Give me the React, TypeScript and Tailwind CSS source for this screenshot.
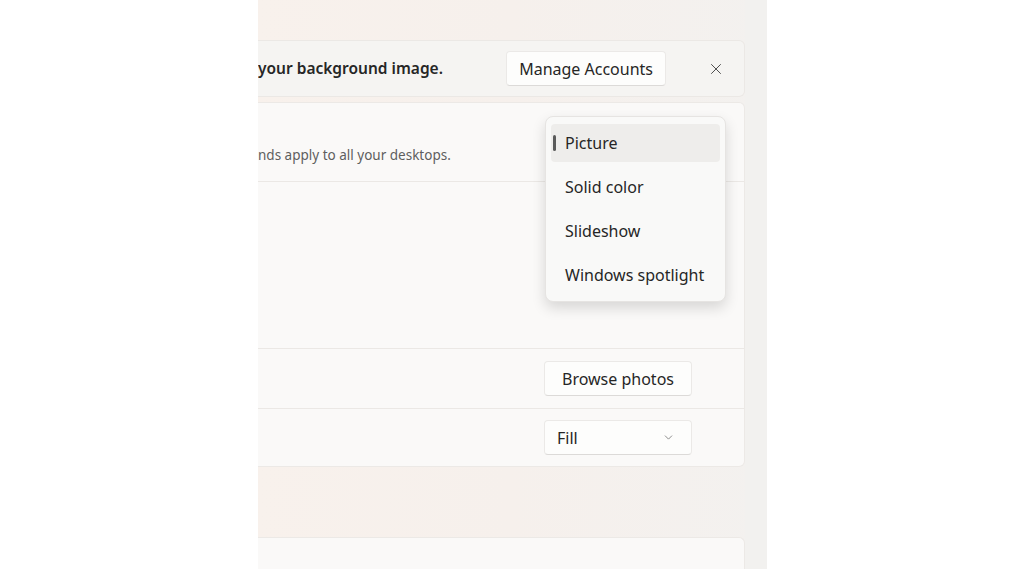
import { X, ChevronDown } from "lucide-react";

const modes = ["Picture", "Solid color", "Slideshow", "Windows spotlight"];

const font = { fontFamily: '"Segoe UI", "Noto Sans", "Open Sans", sans-serif' };

export default function App() {
  return (
    <div className="flex h-[569px] w-[1024px] bg-white text-[#262626]" style={font}>
      <div className="w-[258px] shrink-0" />

      {/* settings window slice */}
      <div className="relative flex h-full w-[509px] shrink-0 overflow-hidden bg-gradient-to-r from-[#f8f1ec] via-[#f6f0ec] to-[#f3f1ef]">
        <div className="flex w-[487px] shrink-0 flex-col pt-[40px]">
          {/* sign-in banner */}
          <div className="flex h-[57px] shrink-0 items-center rounded-r-md border border-l-0 border-[#ebe8e5] bg-[#f5f4f2]">
            <span className="text-[15.5px] font-semibold">your background image.</span>
            <button className="ml-auto h-[35px] rounded-[4px] border border-[#ebe9e7] border-b-[#dcdad8] bg-[#fdfdfc] px-[12px] text-[16px]">
              Manage Accounts
            </button>
            <span className="ml-[40px] mr-[18px] flex h-[20px] w-[20px] items-center justify-center text-[#4a4a4a]">
              <X size={18} strokeWidth={1.3} />
            </span>
          </div>

          {/* background card */}
          <div className="mt-[5px] flex shrink-0 flex-col rounded-r-md border border-l-0 border-[#ece9e6] bg-[#faf9f8]">
            <div className="flex h-[78px] items-end pb-[16px]">
              <span className="text-[13.5px] text-[#5e5e5e]">nds apply to all your desktops.</span>
            </div>
            <div className="h-[167px] border-t border-[#ebe8e5]" />
            <div className="flex h-[60px] items-center border-t border-[#ebe8e5] pr-[52px]">
              <button className="ml-auto h-[35px] w-[148px] rounded-[4px] border border-[#ebe9e7] border-b-[#dcdad8] bg-[#fdfdfc] text-[16px]">
                Browse photos
              </button>
            </div>
            <div className="flex h-[58px] items-center border-t border-[#ebe8e5] pr-[52px]">
              <div className="ml-auto flex h-[35px] w-[148px] items-center justify-between rounded-[4px] border border-[#ebe9e7] border-b-[#dcdad8] bg-[#fdfdfc] pl-[12px] pr-[16px] text-[16px]">
                <span>Fill</span>
                <ChevronDown size={13} strokeWidth={1.4} className="text-[#6a6a6a]" />
              </div>
            </div>
          </div>

          {/* next card */}
          <div className="mt-[70px] h-[40px] shrink-0 rounded-tr-md border border-b-0 border-l-0 border-[#ece9e6] bg-[#faf9f8]" />
        </div>

        <div className="flex-1 bg-[#f2f1ef]" />

        {/* open dropdown */}
        <div className="absolute left-[287px] top-[116px] w-[181px] rounded-[8px] border border-[#e6e4e2] bg-[#f9f9f8] px-[5px] py-[7px] shadow-[0_6px_14px_rgba(0,0,0,0.14)]">
          {modes.map((m, i) => (
            <div
              key={m}
              className={
                "relative flex h-[38px] items-center rounded-[4px] pl-[14px] text-[16px] " +
                (i === 0 ? "bg-[#eeedeb]" : "") +
                (i > 0 ? " mt-[6px]" : "")
              }
            >
              {i === 0 && (
                <span className="absolute left-[2px] top-[11px] h-[16px] w-[3px] rounded-full bg-[#5a5a5a]" />
              )}
              {m}
            </div>
          ))}
        </div>
      </div>
    </div>
  );
}
